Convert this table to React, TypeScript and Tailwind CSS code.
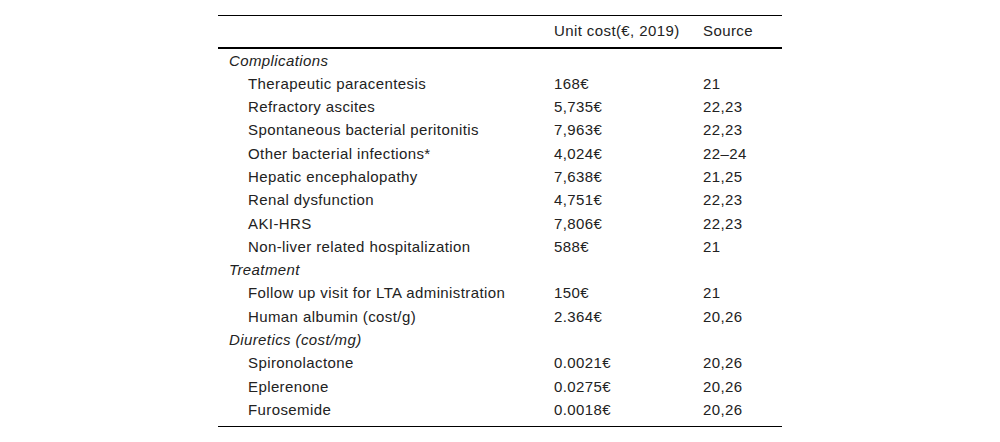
const groups = [
  {
    title: 'Complications',
    rows: [
      ['Therapeutic paracentesis', '168€', '21'],
      ['Refractory ascites', '5,735€', '22,23'],
      ['Spontaneous bacterial peritonitis', '7,963€', '22,23'],
      ['Other bacterial infections*', '4,024€', '22–24'],
      ['Hepatic encephalopathy', '7,638€', '21,25'],
      ['Renal dysfunction', '4,751€', '22,23'],
      ['AKI-HRS', '7,806€', '22,23'],
      ['Non-liver related hospitalization', '588€', '21'],
    ],
  },
  {
    title: 'Treatment',
    rows: [
      ['Follow up visit for LTA administration', '150€', '21'],
      ['Human albumin (cost/g)', '2.364€', '20,26'],
    ],
  },
  {
    title: 'Diuretics (cost/mg)',
    rows: [
      ['Spironolactone', '0.0021€', '20,26'],
      ['Eplerenone', '0.0275€', '20,26'],
      ['Furosemide', '0.0018€', '20,26'],
    ],
  },
];

const App = () => {
  return (
    <div className="w-[1000px] h-[442px] bg-white pt-[15px] text-[#222] text-[15px] tracking-[0.4px] font-['Liberation_Sans',Arial,sans-serif]">
      <table className="w-[564px] mx-auto border-collapse">
        <colgroup>
          <col className="w-[325px]" />
          <col className="w-[149px]" />
          <col className="w-[90px]" />
        </colgroup>
        <thead>
          <tr className="border-t border-b-2 border-black">
            <th className="h-[32px] p-0"></th>
            <th className="h-[32px] p-0 pl-[11px] text-left font-normal">Unit cost(€, 2019)</th>
            <th className="h-[32px] p-0 pl-[11px] text-left font-normal">Source</th>
          </tr>
        </thead>
        <tbody className="border-b border-black">
          {groups.map((group) => (
            <>
              <tr key={group.title}>
                <td colSpan={3} className="p-0 pl-[11px] leading-[23.3px] italic">
                  {group.title}
                </td>
              </tr>
              {group.rows.map((row) => (
                <tr key={row[0]}>
                  <td className="p-0 pl-[30px] leading-[23.3px]">{row[0]}</td>
                  <td className="p-0 pl-[11px] leading-[23.3px]">{row[1]}</td>
                  <td className="p-0 pl-[11px] leading-[23.3px]">{row[2]}</td>
                </tr>
              ))}
            </>
          ))}
          <tr>
            <td colSpan={3} className="p-0 h-[5px]"></td>
          </tr>
        </tbody>
      </table>
    </div>
  );
};

export default App;
